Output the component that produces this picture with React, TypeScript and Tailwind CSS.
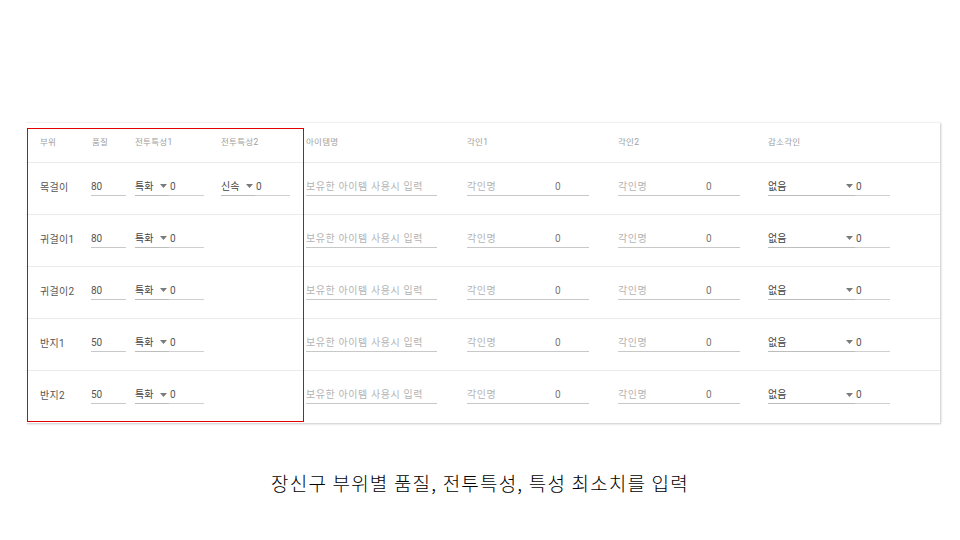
import React from 'react'

type Row = {
  part: string
  quality: string
  stat1: string
  stat2?: string
}

const rows: Row[] = [
  { part: '목걸이', quality: '80', stat1: '특화', stat2: '신속' },
  { part: '귀걸이1', quality: '80', stat1: '특화' },
  { part: '귀걸이2', quality: '80', stat1: '특화' },
  { part: '반지1', quality: '50', stat1: '특화' },
  { part: '반지2', quality: '50', stat1: '특화' },
]

function Caret() {
  return (
    <svg width="7" height="4" viewBox="0 0 7 4" className="shrink-0">
      <path d="M0 0h7L3.5 4z" fill="#7a7a7a" />
    </svg>
  )
}

// select + number field sharing one underline
function SelectNum({ label, selectW, numW }: { label: string; selectW: string; numW: string }) {
  return (
    <div className="flex h-[18px]">
      <div className={`${selectW} flex items-center justify-between border-b border-[#bdbdbd] pr-[2px] text-[#444]`}>
        <span>{label}</span>
        <Caret />
      </div>
      <div className={`${numW} flex items-center border-b border-[#d0d0d0] pl-[1px] text-[#555]`}>0</div>
    </div>
  )
}

function Engrave() {
  return (
    <div className="flex h-[18px] w-[122px] items-center border-b border-[#c8c8c8]">
      <span className="w-[88px] tracking-[0.5px] text-[#b3b3b3]">각인명</span>
      <span className="text-[#777]">0</span>
    </div>
  )
}

export default function App() {
  return (
    <div className="h-[540px] w-[960px] overflow-hidden bg-white font-['Roboto','Noto_Sans_CJK_KR',sans-serif]">
      <div className="relative ml-[26px] mt-[122px] w-[914px] border-t border-[#f2f2f2] bg-white shadow-[1px_1px_2px_rgba(0,0,0,0.22)]">
        {/* header */}
        <div className="flex h-[40px] items-center border-b border-[#ebebeb] pl-[14px] text-[8.5px] tracking-[0.3px] text-[#9e9e9e]">
          <div className="w-[51px]">부위</div>
          <div className="w-[44px] pl-[1px]">품질</div>
          <div className="w-[86px]">전투특성1</div>
          <div className="w-[85px]">전투특성2</div>
          <div className="w-[161px]">아이템명</div>
          <div className="w-[151px]">각인1</div>
          <div className="w-[150px]">각인2</div>
          <div>감소각인</div>
        </div>

        {rows.map((r, i) => (
          <div
            key={r.part}
            className={`flex h-[52px] items-center pb-[4px] pl-[14px] text-[10px] ${
              i < rows.length - 1 ? 'border-b border-[#ebebeb]' : ''
            }`}
          >
            <div className="flex h-[18px] w-[51px] items-center pt-[1px] tracking-[0.3px] text-[#555]">{r.part}</div>
            <div className="w-[44px]">
              <div className="flex h-[18px] w-[35px] items-center border-b border-[#c8c8c8] text-[#555]">
                {r.quality}
              </div>
            </div>
            <div className="w-[86px]">
              <SelectNum label={r.stat1} selectW="w-[34px]" numW="w-[35px]" />
            </div>
            <div className="w-[85px]">
              {r.stat2 && <SelectNum label={r.stat2} selectW="w-[34px]" numW="w-[35px]" />}
            </div>
            <div className="w-[161px]">
              <div className="flex h-[18px] w-[131px] items-center border-b border-[#c8c8c8] tracking-[0.6px] text-[#b3b3b3]">
                보유한 아이템 사용시 입력
              </div>
            </div>
            <div className="w-[151px]">
              <Engrave />
            </div>
            <div className="w-[150px]">
              <Engrave />
            </div>
            <div>
              <SelectNum label="없음" selectW="w-[87px]" numW="w-[35px]" />
            </div>
          </div>
        ))}

        {/* highlight box */}
        <div className="absolute left-[1px] top-[5px] h-[294px] w-[277px] border border-[#e00000]" />
      </div>

      <p className="mt-[46px] text-center font-['Noto_Sans_CJK_KR',sans-serif] text-[19px] font-light leading-[28px] tracking-[1.2px] text-black">
        장신구 부위별 품질, 전투특성, 특성 최소치를 입력
      </p>
    </div>
  )
}
